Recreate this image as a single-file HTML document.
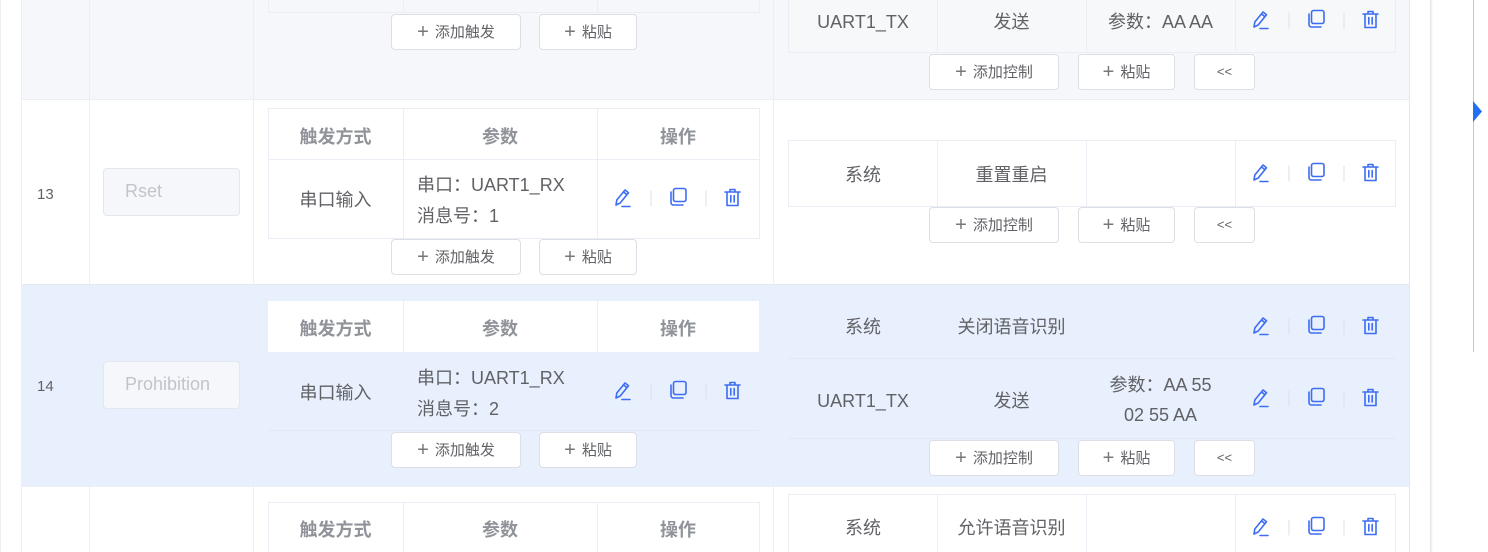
<!DOCTYPE html>
<html style="width:1488px;height:552px;overflow:hidden"><head><meta charset="utf-8"><style>
*{margin:0;padding:0;box-sizing:border-box}
body{width:1488px;height:552px;overflow:hidden;background:#fff;position:relative;font-family:"Liberation Sans","Noto Sans CJK SC",sans-serif;color:#606266}
.a{position:absolute}
.bg{position:absolute;left:21px;width:1389px}
.vl{position:absolute;width:1px;background:#ebeef5}
.hl{position:absolute;height:1px;background:#ebeef5}
.box{position:absolute;border:1px solid #ebeef5}
.t{position:absolute;font-size:18px;text-align:center;white-space:nowrap;line-height:30px}
.h{position:absolute;font-size:18px;font-weight:bold;color:#909399;text-align:center;line-height:30px}
.btn{position:absolute;height:36px;border:1px solid #dcdfe6;border-radius:4px;background:#fff;font-size:15px;color:#606266;text-align:center;line-height:34px;white-space:nowrap}
.btn b{font-weight:normal;font-size:20px;color:#777;vertical-align:-1px;margin-right:6px}
.inp{position:absolute;left:103px;width:137px;height:48px;background:#f5f7fa;border:1px solid #e4e7ed;border-radius:4px;color:#c0c4cc;font-size:18px;padding-left:21px;line-height:44px}
.idx{position:absolute;left:37px;font-size:15px;color:#606266}
.ops{position:absolute;width:134px;height:22px}
</style></head><body>
<svg width="0" height="0" style="position:absolute"><defs>
<g id="ic" fill="none" stroke="#3d6df2" stroke-width="1.6" stroke-linejoin="round" stroke-linecap="round">
<path d="M3 18 L3.8 13 L12 3 L15.5 5.8 L7.2 16 Z M10.5 5 L14 7.8 M9 19.5 H17"/>
<rect x="60.5" y="1.5" width="12.5" height="13" rx="2"/>
<path d="M58 5 V15.5 a2.5 2.5 0 0 0 2.5 2.5 H70"/>
<path d="M112 5 H127 M117 5 V2.5 H122 V5 M114 5 V18.5 H125 V5 M117.8 8.5 V15 M121.2 8.5 V15"/>
<path d="M38 4 V19 M93 4 V19" stroke="#dcdfe6" stroke-width="1"/>
</g></defs></svg>

<div class="bg" style="top:0;height:99px;background:#f5f7fa"></div>
<div class="bg" style="top:285px;height:201px;background:#e8f0fd"></div>
<div class="hl" style="left:21px;width:1389px;top:99px"></div>
<div class="hl" style="left:21px;width:1389px;top:284px;background:#e4eaf5"></div>
<div class="hl" style="left:21px;width:1389px;top:486px"></div>
<div class="vl" style="left:21px;top:0;height:552px"></div>
<div class="vl" style="left:89px;top:0;height:552px"></div>
<div class="vl" style="left:253px;top:0;height:552px"></div>
<div class="vl" style="left:773px;top:0;height:552px"></div>
<div class="vl" style="left:1409px;top:0;height:552px;background:#e6e8ef"></div>
<div class="vl" style="left:0;top:0;height:552px;background:#eceef3"></div>
<div class="a" style="left:1430px;top:0;width:3px;height:552px;background:linear-gradient(90deg,#e2e3e6,#fff)"></div>
<div class="vl" style="left:1473px;top:0;height:352px;background:#c8c8c8"></div>
<svg class="a" style="left:1473px;top:101px" width="10" height="21"><path d="M0 0 L9 10.5 L0 21Z" fill="#1f6ff7"/></svg>

<!-- ROW 12 -->
<div class="box" style="left:268px;top:-10px;width:492px;height:23px"></div>
<div class="vl" style="left:403px;top:0;height:12px"></div>
<div class="vl" style="left:597px;top:0;height:12px"></div>
<div class="btn" style="left:391px;top:14px;width:130px"><b>+</b>添加触发</div>
<div class="btn" style="left:539px;top:14px;width:98px"><b>+</b>粘贴</div>
<div class="box" style="left:788px;top:-10px;width:608px;height:63px;background:#f7f8fa"></div>
<div class="vl" style="left:937px;top:0;height:52px"></div>
<div class="vl" style="left:1086px;top:0;height:52px"></div>
<div class="vl" style="left:1235px;top:0;height:52px"></div>
<div class="t" style="left:789px;width:148px;top:7px">UART1_TX</div>
<div class="t" style="left:937px;width:149px;top:7px">发送</div>
<div class="t" style="left:1086px;width:149px;top:7px">参数：AA AA</div>
<svg class="ops" style="left:1251px;top:9px"><use href="#ic"/></svg>
<div class="btn" style="left:929px;top:54px;width:130px"><b>+</b>添加控制</div>
<div class="btn" style="left:1078px;top:54px;width:97px"><b>+</b>粘贴</div>
<div class="btn" style="left:1194px;top:54px;width:61px;font-size:13px">&lt;&lt;</div>

<!-- ROW 13 -->
<div class="idx" style="top:186px">13</div>
<div class="inp" style="top:168px">Rset</div>
<div class="box" style="left:268px;top:108px;width:492px;height:131px"></div>
<div class="hl" style="left:268px;width:492px;top:159px"></div>
<div class="vl" style="left:403px;top:108px;height:131px"></div>
<div class="vl" style="left:597px;top:108px;height:131px"></div>
<div class="h" style="left:268px;width:135px;top:122px">触发方式</div>
<div class="h" style="left:403px;width:194px;top:122px">参数</div>
<div class="h" style="left:597px;width:162px;top:122px">操作</div>
<div class="t" style="left:268px;width:135px;top:185px">串口输入</div>
<div class="t" style="left:417px;top:170px;text-align:left">串口：UART1_RX</div>
<div class="t" style="left:417px;top:201px;text-align:left">消息号：1</div>
<svg class="ops" style="left:613px;top:187px"><use href="#ic"/></svg>
<div class="btn" style="left:391px;top:239px;width:130px"><b>+</b>添加触发</div>
<div class="btn" style="left:539px;top:239px;width:98px"><b>+</b>粘贴</div>
<div class="box" style="left:788px;top:140px;width:608px;height:67px"></div>
<div class="vl" style="left:937px;top:140px;height:67px"></div>
<div class="vl" style="left:1086px;top:140px;height:67px"></div>
<div class="vl" style="left:1235px;top:140px;height:67px"></div>
<div class="t" style="left:789px;width:148px;top:160px">系统</div>
<div class="t" style="left:937px;width:149px;top:160px">重置重启</div>
<svg class="ops" style="left:1251px;top:162px"><use href="#ic"/></svg>
<div class="btn" style="left:929px;top:207px;width:130px"><b>+</b>添加控制</div>
<div class="btn" style="left:1078px;top:207px;width:97px"><b>+</b>粘贴</div>
<div class="btn" style="left:1194px;top:207px;width:61px;font-size:13px">&lt;&lt;</div>

<!-- ROW 14 -->
<div class="idx" style="top:378px">14</div>
<div class="inp" style="top:361px">Prohibition</div>
<div class="a" style="left:268px;top:301px;width:491px;height:51px;background:#fff"></div>
<div class="hl" style="left:268px;width:491px;top:430px;background:#e3e9f4"></div>
<div class="vl" style="left:403px;top:301px;height:51px"></div>
<div class="vl" style="left:597px;top:301px;height:51px"></div>
<div class="h" style="left:268px;width:135px;top:314px">触发方式</div>
<div class="h" style="left:403px;width:194px;top:314px">参数</div>
<div class="h" style="left:597px;width:162px;top:314px">操作</div>
<div class="t" style="left:268px;width:135px;top:378px">串口输入</div>
<div class="t" style="left:417px;top:363px;text-align:left">串口：UART1_RX</div>
<div class="t" style="left:417px;top:394px;text-align:left">消息号：2</div>
<svg class="ops" style="left:613px;top:380px"><use href="#ic"/></svg>
<div class="btn" style="left:391px;top:432px;width:130px"><b>+</b>添加触发</div>
<div class="btn" style="left:539px;top:432px;width:98px"><b>+</b>粘贴</div>
<div class="hl" style="left:788px;width:608px;top:358px;background:#e3e9f4"></div>
<div class="hl" style="left:788px;width:608px;top:438px;background:#e3e9f4"></div>
<div class="t" style="left:789px;width:148px;top:312px">系统</div>
<div class="t" style="left:937px;width:149px;top:312px">关闭语音识别</div>
<svg class="ops" style="left:1251px;top:315px"><use href="#ic"/></svg>
<div class="t" style="left:789px;width:148px;top:386px">UART1_TX</div>
<div class="t" style="left:937px;width:149px;top:386px">发送</div>
<div class="t" style="left:1086px;width:149px;top:370px">参数：AA 55</div>
<div class="t" style="left:1086px;width:149px;top:400px">02 55 AA</div>
<svg class="ops" style="left:1251px;top:387px"><use href="#ic"/></svg>
<div class="btn" style="left:929px;top:440px;width:130px"><b>+</b>添加控制</div>
<div class="btn" style="left:1078px;top:440px;width:97px"><b>+</b>粘贴</div>
<div class="btn" style="left:1194px;top:440px;width:61px;font-size:13px">&lt;&lt;</div>

<!-- ROW 15 -->
<div class="box" style="left:268px;top:502px;width:492px;height:50px;border-bottom:none"></div>
<div class="vl" style="left:403px;top:502px;height:50px"></div>
<div class="vl" style="left:597px;top:502px;height:50px"></div>
<div class="h" style="left:268px;width:135px;top:515px">触发方式</div>
<div class="h" style="left:403px;width:194px;top:515px">参数</div>
<div class="h" style="left:597px;width:162px;top:515px">操作</div>
<div class="box" style="left:788px;top:494px;width:608px;height:58px;border-bottom:none"></div>
<div class="vl" style="left:937px;top:494px;height:58px"></div>
<div class="vl" style="left:1086px;top:494px;height:58px"></div>
<div class="vl" style="left:1235px;top:494px;height:58px"></div>
<div class="t" style="left:789px;width:148px;top:513px">系统</div>
<div class="t" style="left:937px;width:149px;top:513px">允许语音识别</div>
<svg class="ops" style="left:1251px;top:516px"><use href="#ic"/></svg>
</body></html>
